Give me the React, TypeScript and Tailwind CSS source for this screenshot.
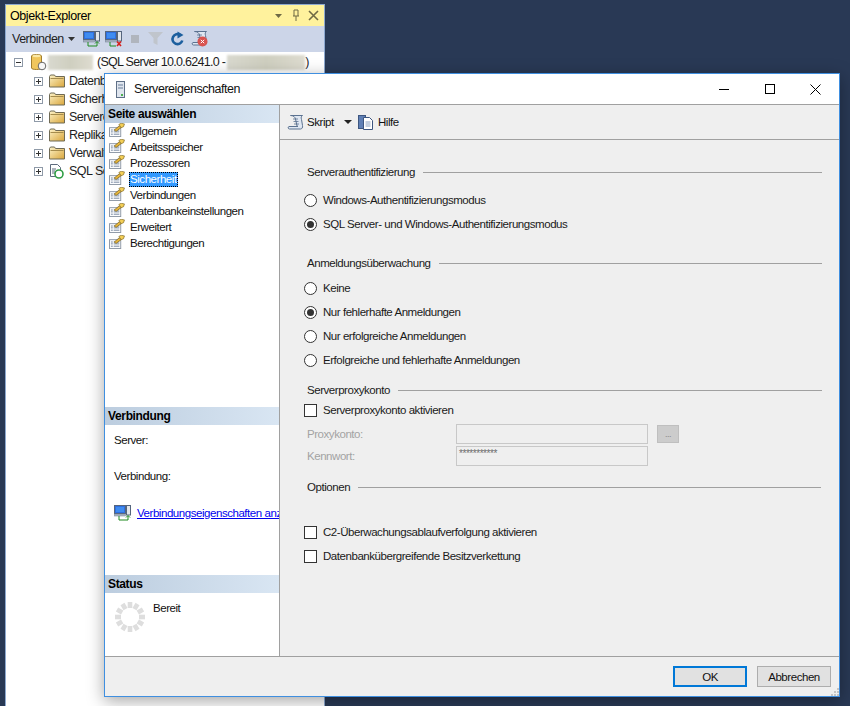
import React from "react";

const FONT = "[font-family:'Liberation_Sans',Arial,sans-serif]";

function NavIcon() {
  return (
    <svg width="16" height="14" viewBox="0 0.5 17 15" className="shrink-0 mb-[2px]">
      <rect x="0.5" y="5.5" width="12" height="9.5" fill="#fbfcfe" stroke="#8b95a3" />
      <path d="M2 8h2M5 8h6M2 10h2M5 10h6M2 12.5h2M5 12.5h6" stroke="#6f8099" strokeWidth="1" />
      <path d="M5.5 8 L11 3.5 L13 5.5 L7.5 9.5z" fill="#e6b53a" stroke="#6e5a22" strokeWidth="0.7" />
      <path d="M10.5 2 L13 0.8 L16.5 1.5 L15.5 4.5 L13 5.5z" fill="#f4cf56" stroke="#7b6420" strokeWidth="0.7" />
    </svg>
  );
}

function Folder() {
  return (
    <svg width="16" height="14" viewBox="0 0 16 14" className="shrink-0">
      <defs>
        <linearGradient id="fg" x1="0" y1="0" x2="1" y2="1">
          <stop offset="0" stopColor="#fdf3c8" />
          <stop offset="1" stopColor="#d9a63c" />
        </linearGradient>
      </defs>
      <path d="M0.5 2.5 l1-1.5 h4 l1 1.5 h9 v10.5 h-15z" fill="url(#fg)" stroke="#6f6a55" />
      <path d="M1.5 4.5h13" stroke="#a58c4c" />
    </svg>
  );
}

function TreeBox({ minus }: { minus?: boolean }) {
  return (
    <span className="w-[9px] h-[9px] border border-[#8f9aa8] bg-white flex items-center justify-center relative shrink-0">
      <span className="w-[5px] h-px bg-[#333]" />
      {!minus && <span className="absolute w-px h-[5px] bg-[#333]" />}
    </span>
  );
}

function TreeRow({ label, icon }: { label: string; icon?: React.ReactNode }) {
  return (
    <div className="h-[18px] flex items-center pl-[28px]">
      <TreeBox />
      <span className="w-[6px] shrink-0" />
      <span className="w-[15px] flex justify-center shrink-0">{icon ?? <Folder />}</span>
      <span className="ml-[5px] text-[12.5px] tracking-[-0.5px] text-[#1e1e1e] whitespace-nowrap">{label}</span>
    </div>
  );
}

function Radio({ label, checked }: { label: string; checked?: boolean }) {
  return (
    <div className="h-6 flex items-center">
      <span className="w-[13px] h-[13px] rounded-full border border-[#333] bg-white flex items-center justify-center shrink-0">
        {checked && <span className="w-[7px] h-[7px] rounded-full bg-[#333]" />}
      </span>
      <span className="ml-[6px] whitespace-nowrap">{label}</span>
    </div>
  );
}

function Check({ label, h = "h-6" }: { label: string; h?: string }) {
  return (
    <div className={`${h} flex items-center`}>
      <span className="w-[13px] h-[13px] border border-[#333] bg-white shrink-0" />
      <span className="ml-[6px] whitespace-nowrap">{label}</span>
    </div>
  );
}

function Section({ label, mt, right = "w-[515px]" }: { label: string; mt: string; right?: string }) {
  return (
    <div className={`${mt} ${right} h-4 flex items-center pl-[3px]`}>
      <span className="whitespace-nowrap">{label}</span>
      <span className="ml-[8px] flex-1 h-px bg-[#a0a0a0]" />
    </div>
  );
}

function PanelHeader({ label }: { label: string }) {
  return (
    <div className="h-[18px] bg-gradient-to-r from-[#bccddf] to-[#d9e6f3] pl-[3px] flex items-center font-bold text-[12px] tracking-[-0.35px] text-black shrink-0">
      {label}
    </div>
  );
}

function ConnIcon({ bad }: { bad?: boolean }) {
  return (
    <svg width="18" height="16" viewBox="0 0 18 16" className="shrink-0">
      <rect x="0.5" y="0.5" width="11" height="8" fill="#2f6fe0" stroke="#55657d" />
      <rect x="2" y="2" width="8" height="5" fill="#3f8cf0" />
      <rect x="0.5" y="9" width="11" height="2" fill="#aeb7c4" stroke="#6e7c90" strokeWidth="0.5" />
      <rect x="12.5" y="0.5" width="4" height="9.5" fill="#e3e6ea" stroke="#55657d" />
      {bad ? (
        <path d="M12 10.5l4 4.5M16 10.5l-4 4.5" stroke="#d4201c" strokeWidth="1.6" />
      ) : (
        <path d="M5 11v4h9v-4M12 12.5l2-2 2 2" fill="none" stroke="#1f8a1f" strokeWidth="1" />
      )}
      {bad && <path d="M5 11v4h6" fill="none" stroke="#1f8a1f" strokeWidth="1" />}
    </svg>
  );
}

function ScriptIcon({ x }: { x?: boolean }) {
  return (
    <svg width="17" height="17" viewBox="0 0 17 17" className="shrink-0">
      <path d="M3.5 1.5 h12 c-1.5 1 -1.5 2 -1 4 l1 6 c.4 2 -.5 3.5 -2 3.5 h-11 c-1.5 0 -2 -2 -.5 -2.5 h9 l-1 -0.5 l-1.5 -7 c-.5 -2 -2 -3.5 -5 -3.5z" fill="#dfe7f2" stroke="#5b7290" strokeWidth="1" />
      <path d="M6 5h5M6.5 7.5h5M7 10h5" stroke="#5b7290" strokeWidth="0.8" />
      {x && <circle cx="11.5" cy="11.5" r="5" fill="#d9534f" />}
      {x && <path d="M9.8 9.8l3.4 3.4M13.2 9.8l-3.4 3.4" stroke="#fff" strokeWidth="1" />}
    </svg>
  );
}

function Spinner() {
  const segs = Array.from({ length: 12 }, (_, i) => i * 30);
  return (
    <svg width="32" height="32" viewBox="0 0 32 32" className="shrink-0">
      {segs.map((a) => (
        <rect key={a} x="13.7" y="1" width="4.6" height="6" fill="#dedede" transform={`rotate(${a} 16 16)`} />
      ))}
    </svg>
  );
}

function Blur({ w }: { w: string }) {
  return <span className={`block ${w} h-[15px] bg-gradient-to-r from-[#d9d9cf] via-[#cfcfc0] to-[#dedcd0] blur-[1px] shrink-0`} />;
}

export default function App() {
  return (
    <div className={`relative w-[850px] h-[706px] overflow-hidden bg-[#293955] ${FONT} text-[11.5px] leading-[14px] tracking-[-0.45px] text-[#1a1a1a]`}>
      {/* Object Explorer */}
      <div className="absolute left-[5px] top-[4px] w-[320px] h-[702px] border border-[#8ea9cf] border-b-0 flex flex-col bg-white">
        <div className="h-[21px] bg-[#fff29d] flex items-center pl-[4px] pr-[5px] text-[12.5px] tracking-[-0.4px] text-black shrink-0">
          <span>Objekt-Explorer</span>
          <span className="ml-auto flex items-center gap-[7px]">
            <svg width="10" height="10" viewBox="0 0 10 10"><path d="M1 3h7L4.5 7z" fill="#6f6a45" /></svg>
            <svg width="10" height="13" viewBox="0 0 10 13"><path d="M3 1v6M7 1v6M2 7h6M3 1h4M5 7v5" stroke="#6f6a45" fill="none" /></svg>
            <svg width="11" height="11" viewBox="0 0 11 11"><path d="M1 1l9 9M10 1l-9 9" stroke="#6f6a45" strokeWidth="1.6" /></svg>
          </span>
        </div>
        <div className="h-[26px] bg-[#ccd5e8] flex items-center pl-[6px] shrink-0 text-[#1e1e1e] border-b border-[#ccd5e8]">
          <span className="w-[50px] text-[12.5px] tracking-[-0.5px]">Verbinden</span>
          <svg width="7" height="4" viewBox="0 0 7 4" className="ml-[6px]"><path d="M0 0h7L3.5 4z" fill="#333" /></svg>
          <span className="ml-[8px] flex items-center">
            <ConnIcon />
            <span className="ml-[4px]"><ConnIcon bad /></span>
            <span className="ml-[6px] w-[11px] flex justify-center"><span className="w-[8px] h-[8px] bg-[#b0b5bd]" /></span>
            <svg width="15" height="15" viewBox="0 0 15 15" className="ml-[8px]"><path d="M0 1h15l-5.5 6v7l-4-2V7z" fill="#c0c5cc" /></svg>
            <svg width="15" height="16" viewBox="0 0 15 16" className="ml-[7px]"><path d="M12.3 9.5a5 5 0 1 1-2-5.5" fill="none" stroke="#1c5f9e" strokeWidth="2.6" /><path d="M7.5 0.5l6 3.5-6 3.5z" fill="#1c5f9e" /></svg>
            <span className="ml-[6px]"><ScriptIcon x /></span>
          </span>
        </div>
        <div className="flex-1 bg-white">
          <div className="h-[20px] flex items-center pl-[8px]">
            <TreeBox minus />
            <svg width="17" height="18" viewBox="0 0 17 18" className="ml-[7px] shrink-0">
              <path d="M1.5 3 c0-2 10-2 10 0 v12 c0 2-10 2-10 0z" fill="#f0c65c" stroke="#a27f2f" />
              <ellipse cx="6.5" cy="3" rx="4" ry="1.2" fill="#fbe9a8" />
              <circle cx="12" cy="13" r="3.8" fill="#f7f7f7" stroke="#666" />
            </svg>
            <span className="ml-px flex items-center text-[12.5px] tracking-[-0.72px] text-[#1e1e1e] whitespace-nowrap">
              <Blur w="w-[45px]" />
              <span className="ml-[4px]">(SQL Server 10.0.6241.0 -</span>
              <span className="ml-[2px] flex"><Blur w="w-[78px]" /></span>
              <span>)</span>
            </span>
          </div>
          <div>
            <TreeRow label="Datenbanken" />
            <TreeRow label="Sicherheit" />
            <TreeRow label="Serverobjekte" />
            <TreeRow label="Replikation" />
            <TreeRow label="Verwaltung" />
            <TreeRow
              label="SQL Server-Agent"
              icon={
                <svg width="15" height="16" viewBox="0 0 15 16">
                  <path d="M1.5 1.5h7l3 3v9h-10z" fill="#fff" stroke="#5d6b7d" />
                  <path d="M3 6h4M3 8h3M3 10h3" stroke="#5d6b7d" />
                  <circle cx="10" cy="11" r="4" fill="#fff" stroke="#2f9e44" strokeWidth="1.6" />
                </svg>
              }
            />
          </div>
        </div>
      </div>

      {/* Dialog */}
      <div className="absolute left-[104px] top-[73px] w-[736px] h-[624px] border border-[#3f8fe0] bg-[#efefef] flex flex-col shadow-[0_4px_16px_rgba(0,0,0,0.35)]">
        <div className="h-[30px] bg-white flex items-center pl-[11px] shrink-0">
          <svg width="9" height="17" viewBox="0 0 9 17">
            <rect x="0.5" y="0.5" width="8" height="16" fill="#dfe5ee" stroke="#5f7087" />
            <path d="M2 4h5M2 7h5" stroke="#6b7f99" />
            <rect x="5" y="13" width="2" height="2" fill="#4caf50" />
          </svg>
          <span className="ml-[9px] text-[12.5px] tracking-[-0.45px] text-[#111]">Servereigenschaften</span>
          <span className="ml-auto flex items-center">
            <span className="w-[46px] flex justify-center">
              <span className="w-[10px] h-px bg-black" />
            </span>
            <span className="w-[46px] flex justify-center">
              <span className="w-[10px] h-[10px] border border-black" />
            </span>
            <span className="w-[46px] flex justify-center pr-[2px]">
              <svg width="11" height="11" viewBox="0 0 11 11"><path d="M.5.5l10 10M10.5.5l-10 10" stroke="#000" /></svg>
            </span>
          </span>
        </div>
        <div className="flex flex-1 min-h-0 border-t border-[#a0a0a0] border-b">
          <div className="w-[175px] bg-white border-r border-[#a0a0a0] flex flex-col shrink-0">
            <PanelHeader label="Seite auswählen" />
            <div className="h-[284px] shrink-0">
              {["Allgemein", "Arbeitsspeicher", "Prozessoren", "Sicherheit", "Verbindungen", "Datenbankeinstellungen", "Erweitert", "Berechtigungen"].map((l) => (
                <div key={l} className="h-4 flex items-center pl-[4px] text-[#111]">
                  <NavIcon />
                  {l === "Sicherheit" ? (
                    <span className="ml-[4px] px-px h-[15px] leading-[15px] bg-[#3399ff] text-white outline-1 outline-dotted outline-black -outline-offset-1">{l}</span>
                  ) : (
                    <span className="ml-[5px]">{l}</span>
                  )}
                </div>
              ))}
            </div>
            <PanelHeader label="Verbindung" />
            <div className="h-[150px] shrink-0 pl-[9px] overflow-hidden whitespace-nowrap text-[#111]">
              <div className="mt-[8px] h-[14px]">Server:</div>
              <div className="mt-[22px] h-[14px]">Verbindung:</div>
              <div className="mt-[21px] h-[17px] flex items-center">
                <ConnIcon />
                <span className="ml-[5px] text-[#0000ee] underline">Verbindungseigenschaften anzeigen</span>
              </div>
            </div>
            <PanelHeader label="Status" />
            <div className="flex pl-[9px] pt-[8px] text-[#111]">
              <Spinner />
              <span className="ml-[7px]">Bereit</span>
            </div>
          </div>
          <div className="flex-1 flex flex-col min-w-0">
            <div className="h-[35px] border-b border-[#a0a0a0] flex items-center pl-[7px] shrink-0 text-[#111]">
              <ScriptIcon />
              <span className="ml-[3px] w-[27px]">Skript</span>
              <svg width="8" height="4" viewBox="0 0 8 4" className="ml-[10px]"><path d="M0 0h8L4 4z" fill="#222" /></svg>
              <svg width="17" height="17" viewBox="0 0 17 17" className="ml-[6px]">
                <rect x="0.5" y="1.5" width="7" height="13" fill="#5f7fb5" stroke="#3d5680" />
                <path d="M5.5 3.5h6l3 3v9h-9z" fill="#fff" stroke="#3d5680" />
                <path d="M7.5 8h5M7.5 10h5M7.5 12h5" stroke="#8aa0c0" />
              </svg>
              <span className="ml-[3px]">Hilfe</span>
            </div>
            <div className="flex-1 pl-[24px] text-[#1a1a1a]">
              <Section label="Serverauthentifizierung" mt="mt-[24px]" right="w-[518px]" />
              <div className="mt-2">
                <Radio label="Windows-Authentifizierungsmodus" />
                <Radio label="SQL Server- und Windows-Authentifizierungsmodus" checked />
              </div>
              <Section label="Anmeldungsüberwachung" mt="mt-[19px]" right="w-[518px]" />
              <div className="mt-[5px]">
                <Radio label="Keine" />
                <Radio label="Nur fehlerhafte Anmeldungen" checked />
                <Radio label="Nur erfolgreiche Anmeldungen" />
                <Radio label="Erfolgreiche und fehlerhafte Anmeldungen" />
              </div>
              <Section label="Serverproxykonto" mt="mt-[10px]" right="w-[518px]" />
              <div className="mt-[2px]">
                <Check label="Serverproxykonto aktivieren" h="h-5" />
              </div>
              <div className="mt-[4px] h-5 flex items-center pl-[3px] text-[#a3a3a3]">
                <span className="w-[149px]">Proxykonto:</span>
                <span className="w-[192px] h-5 border border-[#c8c8c8] bg-[#efefef]" />
                <span className="ml-[9px] w-[22px] h-[18px] bg-[#cccccc] border border-[#bfbfbf] flex items-center justify-center text-[9px] text-[#888]">...</span>
              </div>
              <div className="mt-[2px] h-5 flex items-center pl-[3px] text-[#a3a3a3]">
                <span className="w-[149px]">Kennwort:</span>
                <span className="w-[192px] h-5 border border-[#c8c8c8] bg-[#efefef] pl-[2px] text-[#6d6d6d] text-[10px] leading-[14px]">***********</span>
              </div>
              <Section label="Optionen" mt="mt-[13px]" right="w-[517px]" />
              <div className="mt-[25px]">
                <Check label="C2-Überwachungsablaufverfolgung aktivieren" />
                <Check label="Datenbankübergreifende Besitzverkettung" />
              </div>
            </div>
          </div>
        </div>
        <div className="h-[39px] flex items-center justify-end pr-[8px] gap-[10px] shrink-0 relative text-[#111]">
          <button className="w-[74px] h-[21px] border-2 border-[#0078d7] bg-[#e1e1e1] flex items-center justify-center">OK</button>
          <button className="w-[74px] h-[21px] border border-[#adadad] bg-[#e1e1e1] flex items-center justify-center">Abbrechen</button>
          <svg width="8" height="8" viewBox="0 0 8 8" className="absolute right-0 bottom-0">
            <path d="M6 0h2v2H6zM3 3h2v2H3zM6 3h2v2H6zM0 6h2v2H0zM3 6h2v2H3zM6 6h2v2H6z" fill="#c4c4c4" />
          </svg>
        </div>
      </div>
    </div>
  );
}
